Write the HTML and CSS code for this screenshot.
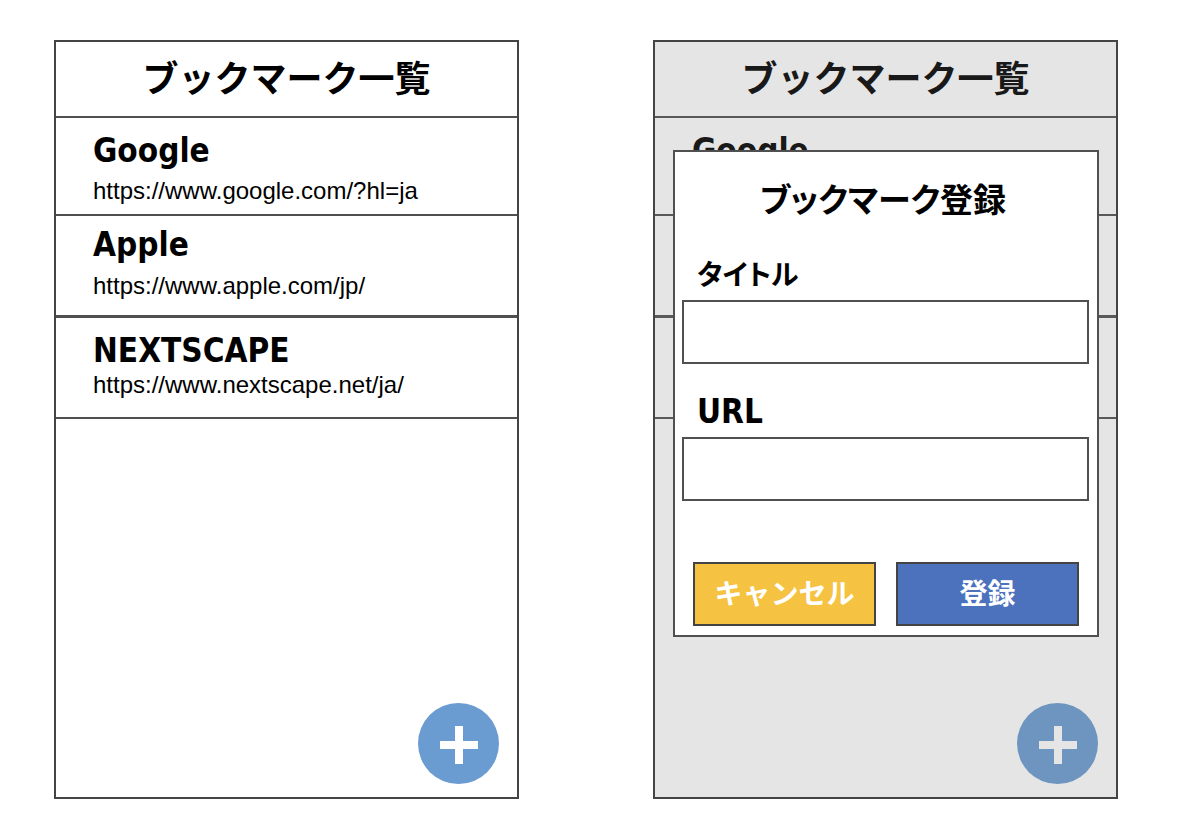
FILE: index.html
```html
<!DOCTYPE html>
<html lang="ja">
<head>
<meta charset="utf-8">
<meta name="viewport" content="width=device-width, initial-scale=1">
<title>ブックマーク一覧</title>
<link rel="stylesheet" href="styles.css">
</head>
<body>
<main class="board">
  <section class="screen">
    <h1 class="screen-title">ブックマーク一覧</h1>
    <ul class="bookmarks">
      <li class="bookmark">
        <h2 class="bookmark-name">Google</h2>
        <a class="bookmark-url" href="https://www.google.com/?hl=ja">https://www.google.com/?hl=ja</a>
      </li>
      <li class="bookmark bookmark-raised">
        <h2 class="bookmark-name">Apple</h2>
        <a class="bookmark-url" href="https://www.apple.com/jp/">https://www.apple.com/jp/</a>
      </li>
      <li class="bookmark bookmark-tight">
        <h2 class="bookmark-name">NEXTSCAPE</h2>
        <a class="bookmark-url" href="https://www.nextscape.net/ja/">https://www.nextscape.net/ja/</a>
      </li>
    </ul>
    <button class="add" type="button" aria-label="追加">
      <svg class="add-icon" viewBox="0 0 38 38" aria-hidden="true"><path d="M15 0h8v15h15v8H23v15h-8V23H0v-8h15z"/></svg>
    </button>
  </section>

  <section class="screen">
    <h1 class="screen-title">ブックマーク一覧</h1>
    <ul class="bookmarks">
      <li class="bookmark">
        <h2 class="bookmark-name">Google</h2>
      </li>
      <li class="bookmark bookmark-raised"></li>
      <li class="bookmark bookmark-tight"></li>
    </ul>
    <button class="add" type="button" aria-label="追加">
      <svg class="add-icon" viewBox="0 0 38 38" aria-hidden="true"><path d="M15 0h8v15h15v8H23v15h-8V23H0v-8h15z"/></svg>
    </button>
    <div class="backdrop"></div>
    <form class="dialog" role="dialog" aria-labelledby="dialog-title">
      <h2 class="dialog-title" id="dialog-title">ブックマーク登録</h2>
      <div class="field">
        <label class="field-label field-label-kana" for="title">タイトル</label>
        <input class="field-input" id="title" type="text">
      </div>
      <div class="field">
        <label class="field-label" for="url">URL</label>
        <input class="field-input" id="url" type="text">
      </div>
      <div class="actions">
        <button class="action action-cancel" type="button">キャンセル</button>
        <button class="action action-submit" type="button">登録</button>
      </div>
    </form>
  </section>
</main>
</body>
</html>
```
FILE: styles.css
```css
* {
  box-sizing: border-box;
}

body {
  margin: 0;
  background: #fff;
  color: #000;
  font-family: "DejaVu Sans Condensed", "Noto Sans CJK JP", sans-serif;
}

h1,
h2,
ul {
  margin: 0;
  padding: 0;
}

.board {
  display: grid;
  grid-template-columns: 1fr 1fr;
  column-gap: 134px;
  min-height: 100vh;
  padding: 40px 82px 40px 54px;
}

.screen {
  position: relative;
  border: 2px solid #444;
}

.screen-title {
  padding: 8px 0 13px;
  border-bottom: 2px solid #505050;
  font-family: "Noto Sans CJK JP", sans-serif;
  font-size: 36px;
  line-height: 53px;
  text-align: center;
}

.bookmarks {
  list-style: none;
}

.bookmark {
  display: flex;
  flex-direction: column;
  gap: 6px;
  min-height: 98px;
  padding: 13px 37px 0;
  border-bottom: 2px solid #505050;
}

.bookmark-raised {
  gap: 7px;
  min-height: 102px;
  padding-top: 9px;
  border-bottom-width: 3px;
}

.bookmark-tight {
  gap: 0;
  min-height: 101px;
  padding-top: 13px;
}

.bookmark-name {
  font-size: 33px;
  line-height: 40px;
}

.bookmark-url {
  color: #000;
  font-family: "Liberation Sans", Arial, sans-serif;
  font-size: 24px;
  line-height: 28px;
  text-decoration: none;
}

.add {
  position: absolute;
  right: 18px;
  bottom: 13px;
  display: grid;
  place-items: center;
  width: 81px;
  height: 81px;
  padding: 3px 0 0;
  border: 0;
  border-radius: 50%;
  background: #6a9bd1;
}

.add-icon {
  width: 38px;
  height: 38px;
  fill: #fff;
}

.backdrop {
  position: absolute;
  inset: 0;
  background: rgba(127, 127, 127, 0.2);
}

.dialog {
  position: absolute;
  top: 108px;
  right: 17px;
  left: 18px;
  padding: 20px 8px 9px 7px;
  border: 2px solid #505050;
  background: #fff;
}

.dialog-title {
  padding-right: 5px;
  font-size: 33px;
  font-family: "Noto Sans CJK JP", sans-serif;
  font-feature-settings: "palt";
  line-height: 52px;
  text-align: center;
}

.field {
  display: flex;
  flex-direction: column;
  margin-top: 24px;
}

.field-label {
  padding: 0 0 1px 15px;
  font-size: 33px;
  font-weight: 700;
  line-height: 48px;
}

.field-label-kana {
  padding: 4px 0 0 15px;
  font-size: 28px;
  font-feature-settings: "palt";
}

.field-input {
  width: 100%;
  height: 64px;
  padding: 0 12px;
  border: 2px solid #505050;
  background: #fff;
  font-size: 24px;
}

.actions {
  display: grid;
  grid-template-columns: 1fr 1fr;
  gap: 20px;
  margin-top: 61px;
  padding: 0 10px 0 11px;
}

.action {
  height: 64px;
  padding: 0 0 5px;
  border: 2px solid #444;
  color: #fff;
  font-family: "Noto Sans CJK JP", sans-serif;
  font-size: 28px;
  font-weight: 700;
}

.action-cancel {
  background: #f5c242;
}

.action-submit {
  background: #4c72be;
}
```
